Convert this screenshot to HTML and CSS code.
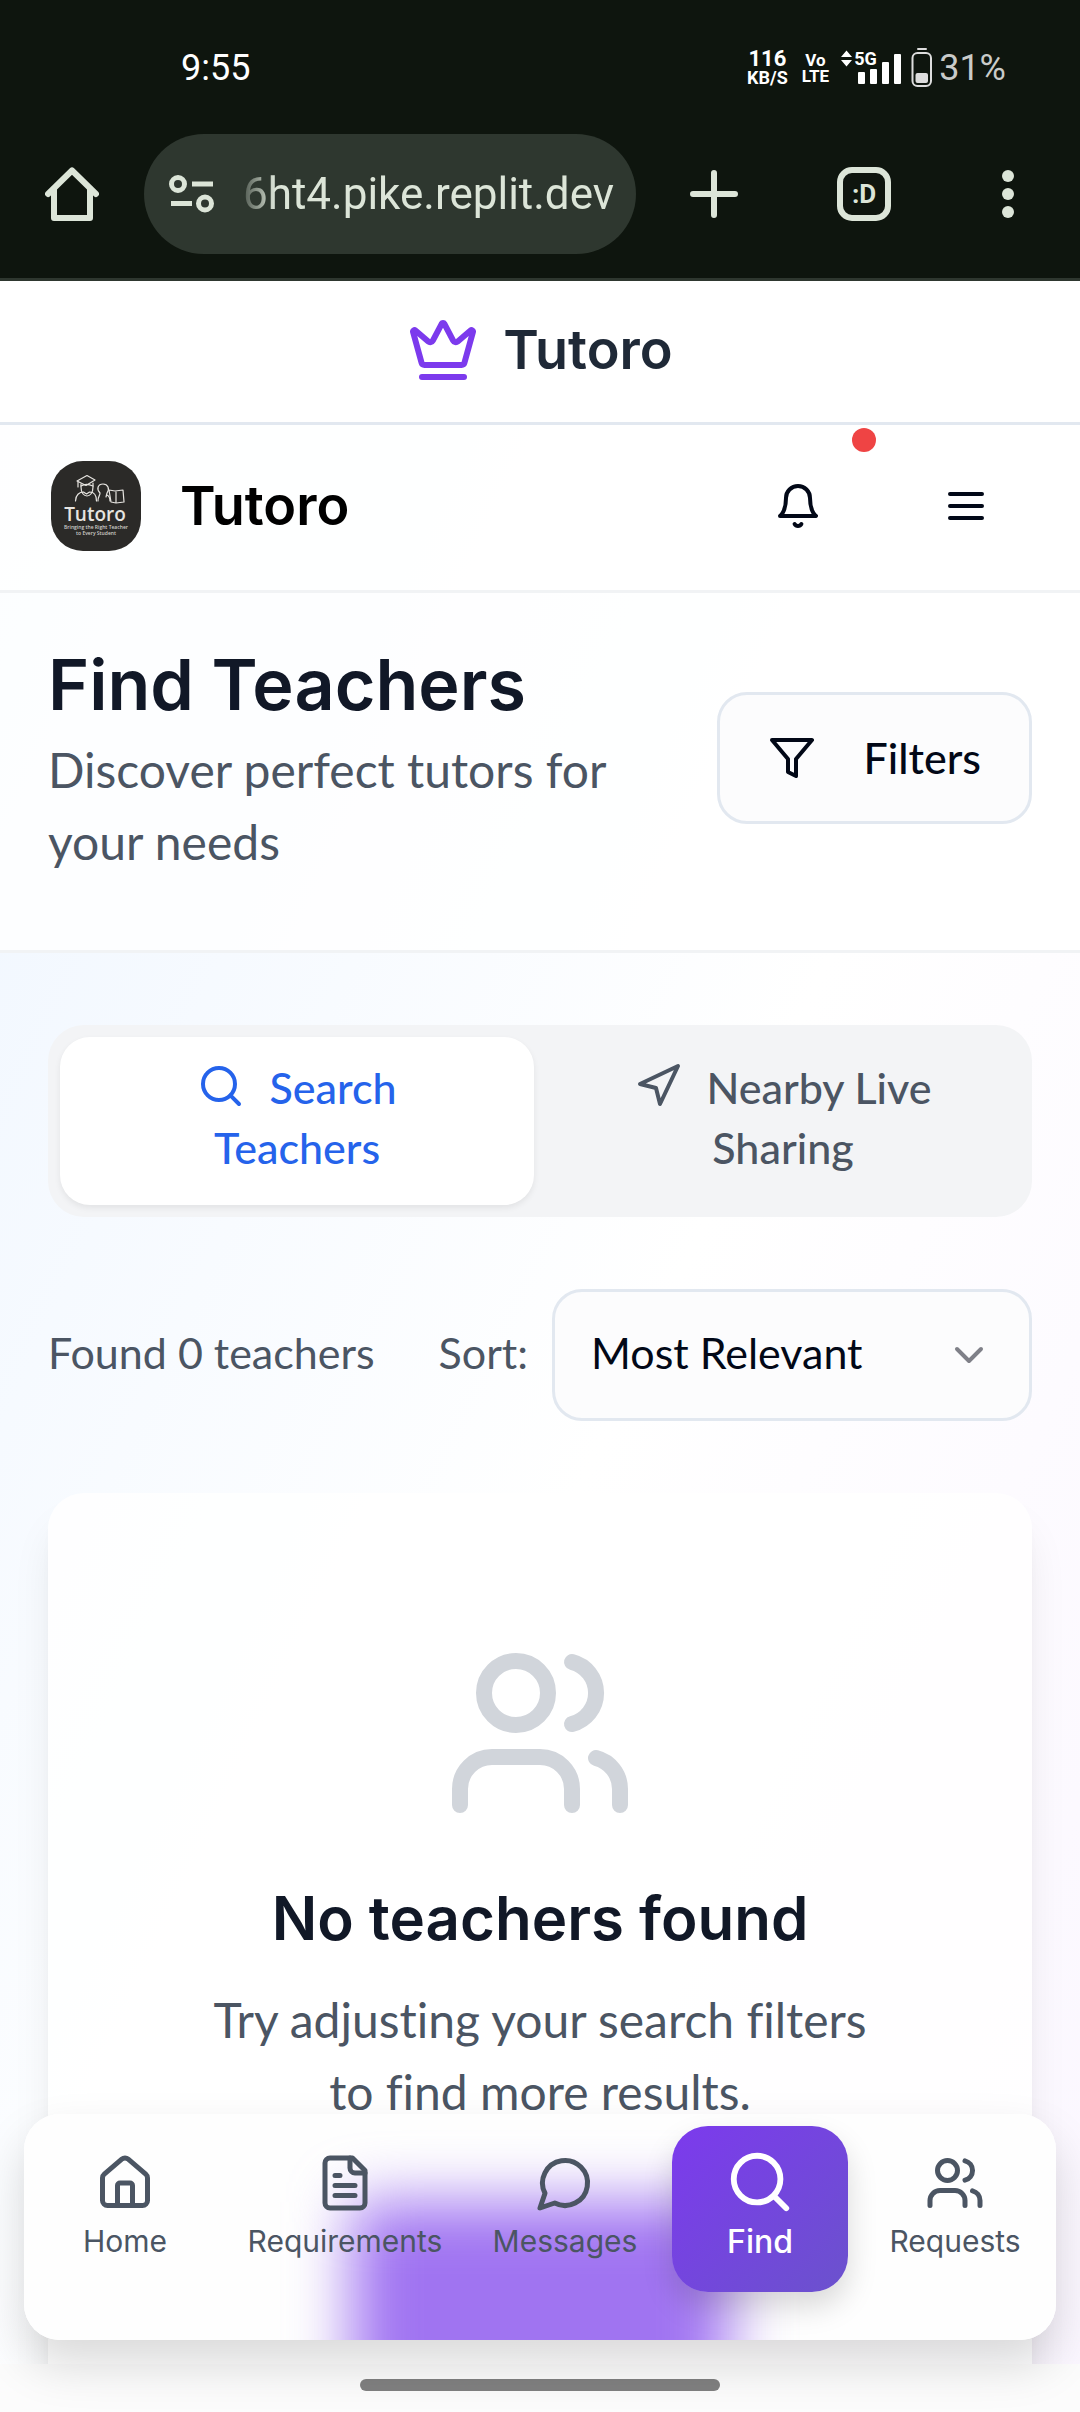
FILE: index.html
```html
<!DOCTYPE html>
<html lang="en">
<head>
<meta charset="utf-8">
<meta name="viewport" content="width=device-width, initial-scale=1">
<title>Tutoro</title>
<link rel="stylesheet" href="styles.css">
</head>
<body>
<div class="screen">
  <div class="browser">
    <div class="status">
      <span class="clock">9:55</span>
      <div class="status-icons">
        <span class="speed"><b>116</b><small>KB/S</small></span>
        <span class="volte"><b>Vo</b><b>LTE</b></span>
        <span class="signal">
          <svg width="60" height="36" viewBox="0 0 60 36" fill="#fff" aria-hidden="true">
            <path d="M0 7l5.500-6.500L11 7zM0 10h11l-5.500 6.500z"/>
            <rect x="17" y="22" width="7" height="12" rx="1"/><rect x="29" y="19" width="7" height="15" rx="1"/>
            <rect x="41" y="12" width="7" height="22" rx="1"/><rect x="53" y="4" width="7" height="30" rx="1"/>
          </svg>
          <b class="network">5G</b>
        </span>
        <svg class="battery" width="22" height="40" viewBox="0 0 22 40" aria-hidden="true">
          <rect x="6" y="0" width="10" height="2" rx="1" fill="#ddd"/>
          <rect x="1.500" y="5" width="18.500" height="33" rx="5" fill="none" stroke="#ddd" stroke-width="2"/>
          <rect x="4.500" y="25" width="12.500" height="10" rx="2" fill="#ddd"/>
        </svg>
        <span class="charge">31%</span>
      </div>
    </div>
    <div class="toolbar">
      <button class="tool" aria-label="Home">
        <svg width="54" height="54" viewBox="0 0 54 54" fill="none" stroke="#dce5d8" stroke-width="6" stroke-linejoin="round" stroke-linecap="round" aria-hidden="true"><path d="M3 27L27 3.500 51 27"/><path d="M9 22v29h36V22"/></svg>
      </button>
      <div class="address">
        <svg width="46" height="38" viewBox="0 0 46 38" fill="none" stroke="#dce5d8" stroke-width="5" aria-hidden="true"><circle cx="9" cy="9" r="6.500"/><path d="M23 9h21M2 28.500h21"/><circle cx="36" cy="28.500" r="6.500"/></svg>
        <input class="url" type="text" value="6ht4.pike.replit.dev" aria-label="Address">
      </div>
      <button class="tool tool-wide" aria-label="New tab">
        <svg width="48" height="48" viewBox="0 0 48 48" stroke="#dce5d8" stroke-width="6" stroke-linecap="round" aria-hidden="true"><path d="M24 3v42M3 24h42"/></svg>
      </button>
      <button class="tool"><span class="tabs-count">:D</span></button>
      <button class="tool" aria-label="Menu">
        <svg width="12" height="48" viewBox="0 0 12 48" fill="#dce5d8" aria-hidden="true"><circle cx="6" cy="6" r="6"/><circle cx="6" cy="24" r="6"/><circle cx="6" cy="42" r="6"/></svg>
      </button>
    </div>
  </div>

  <div class="viewport">
    <div class="scroller">
      <header class="brand">
        <svg class="icon icon-brand" viewBox="0 0 24 24" aria-hidden="true"><path d="M11.562 3.266a.5.5 0 0 1 .876 0L15.390 8.870a1 1 0 0 0 1.516.294L21.183 5.500a.5.5 0 0 1 .798.519l-2.834 10.246a1 1 0 0 1-.956.734H5.810a1 1 0 0 1-.957-.734L2.020 6.020a.5.5 0 0 1 .798-.519l4.276 3.664a1 1 0 0 0 1.516-.294z"/><path d="M5 21h14"/></svg>
        <span class="wordmark">Tutoro</span>
      </header>

      <div class="page">
        <header class="appbar">
          <a class="home-link" href="#">
            <svg class="logo" viewBox="0 0 90 90" aria-hidden="true">
              <rect width="90" height="90" rx="32" fill="#2b2a28"/>
              <g fill="none" stroke="#e6e4e0" stroke-width="1.200" stroke-linecap="round" stroke-linejoin="round">
                <path d="M26 20l10-5.500 8 4.500-9 5.500z"/><path d="M27 21v5M30 23v3c0 6 3 9 6 9s6-3 6-9v-4"/><path d="M30 25c3-2 8-2 12 0"/>
                <path d="M24.500 40c0-6 4-9 8-9l3 2 3-2c5 0 7 4 7 9"/>
                <path d="M49 32c-4-4-2-9 3-9s7 5 4 9l-1 4M49 32c0 3-2 3-2 8M56 34c2 1 3 3 3 6"/>
                <path d="M58 29l6 1 8-1 1 12-8 1-5-1zM65 31v10"/>
              </g>
              <text x="44" y="60" text-anchor="middle" class="logo-name">Tutoro</text>
              <text x="45" y="68" text-anchor="middle" class="logo-tag">Bringing the Right Teacher</text>
              <text x="45" y="74" text-anchor="middle" class="logo-tag">to Every Student</text>
            </svg>
            <span class="wordmark">Tutoro</span>
          </a>
          <div class="actions">
            <button class="icon-button" aria-label="Notifications">
              <svg class="icon" viewBox="0 0 24 24" aria-hidden="true"><path d="M6 8a6 6 0 0 1 12 0c0 7 3 9 3 9H3s3-2 3-9"/><path d="M10.300 21a1.940 1.940 0 0 0 3.400 0"/></svg>
              <span class="dot"></span>
            </button>
            <button class="icon-button" aria-label="Open menu">
              <svg class="icon" viewBox="0 0 24 24" aria-hidden="true"><path d="M4 6h16M4 12h16M4 18h16"/></svg>
            </button>
          </div>
        </header>

        <section class="intro">
          <div class="intro-text">
            <h1>Find Teachers</h1>
            <p>Discover perfect tutors for your needs</p>
          </div>
          <button class="filters">
            <svg class="icon" viewBox="0 0 24 24" aria-hidden="true"><path d="M22 3H2l8 9.460V19l4 2v-8.540z"/></svg>
            Filters
          </button>
        </section>

        <main class="content">
          <div class="tabs" role="tablist">
            <button class="tab tab-active" role="tab" aria-selected="true"><svg class="icon" viewBox="0 0 24 24" aria-hidden="true"><circle cx="11" cy="11" r="8"/><path d="M21 21l-4.300-4.300"/></svg>Search Teachers</button>
            <button class="tab" role="tab" aria-selected="false"><svg class="icon" viewBox="0 0 24 24" aria-hidden="true"><path d="M3 11l19-9-9 19-2-8z"/></svg>Nearby Live Sharing</button>
          </div>

          <div class="results-bar">
            <p>Found 0 teachers</p>
            <div class="sort">
              <label for="sort">Sort:</label>
              <div class="select">
                <select id="sort"><option>Most Relevant</option></select>
                <svg class="icon" viewBox="0 0 24 24" aria-hidden="true"><path d="M6 9l6 6 6-6"/></svg>
              </div>
            </div>
          </div>

          <section class="card">
            <svg class="icon icon-empty" viewBox="0 0 24 24" aria-hidden="true"><path d="M16 21v-2a4 4 0 0 0-4-4H6a4 4 0 0 0-4 4v2"/><circle cx="9" cy="7" r="4"/><path d="M22 21v-2a4 4 0 0 0-3-3.870"/><path d="M16 3.130a4 4 0 0 1 0 7.750"/></svg>
            <h2>No teachers found</h2>
            <p>Try adjusting your search filters to find more results.</p>
          </section>
        </main>
      </div>
    </div>

    <nav class="dock">
      <span class="dock-glass"></span>
      <a class="dock-item" href="#"><svg class="icon" viewBox="0 0 24 24" aria-hidden="true"><path d="M15 21v-8a1 1 0 0 0-1-1h-4a1 1 0 0 0-1 1v8"/><path d="M3 10a2 2 0 0 1 .709-1.528l7-5.999a2 2 0 0 1 2.582 0l7 5.999A2 2 0 0 1 21 10v9a2 2 0 0 1-2 2H5a2 2 0 0 1-2-2z"/></svg>Home</a>
      <a class="dock-item" href="#"><svg class="icon" viewBox="0 0 24 24" aria-hidden="true"><path d="M15 2H6a2 2 0 0 0-2 2v16a2 2 0 0 0 2 2h12a2 2 0 0 0 2-2V7z"/><path d="M14 2v4a2 2 0 0 0 2 2h4M10 9H8M16 13H8M16 17H8"/></svg>Requirements</a>
      <a class="dock-item" href="#"><svg class="icon" viewBox="0 0 24 24" aria-hidden="true"><path d="M7.900 20A9 9 0 1 0 4 16.100L2 22z"/></svg>Messages</a>
      <a class="dock-item dock-active" href="#" aria-current="page"><svg class="icon" viewBox="0 0 24 24" aria-hidden="true"><circle cx="11" cy="11" r="8"/><path d="M21 21l-4.300-4.300"/></svg>Find</a>
      <a class="dock-item" href="#"><svg class="icon" viewBox="0 0 24 24" aria-hidden="true"><path d="M16 21v-2a4 4 0 0 0-4-4H6a4 4 0 0 0-4 4v2"/><circle cx="9" cy="7" r="4"/><path d="M22 21v-2a4 4 0 0 0-3-3.870"/><path d="M16 3.130a4 4 0 0 1 0 7.750"/></svg>Requests</a>
    </nav>
  </div>

  <div class="gesture"><span class="pill"></span></div>
</div>
</body>
</html>
```
FILE: styles.css
```css
* { box-sizing: border-box; margin: 0; }

body {
  font-family: Lato, Inter, sans-serif;
  font-size: 43px;
  line-height: 60px;
  font-variant-ligatures: none;
  color: #020817;
  background: #fff;
}

button, input, select {
  font: inherit;
  font-variant-ligatures: none;
  color: inherit;
  background: none;
  border: 0;
  padding: 0;
}

a { color: inherit; text-decoration: none; }

.screen { display: flex; flex-direction: column; height: 100vh; }

/* Phone status bar and browser toolbar */
.browser {
  flex: none;
  background: #0e150e;
  border-bottom: 3px solid #2e372f;
  padding-bottom: 24px;
  font-family: Roboto, sans-serif;
}
.status {
  display: flex;
  justify-content: space-between;
  align-items: center;
  height: 134px;
  padding: 2px 74px 0 181px;
  color: #fff;
  font-size: 36px;
}
.status-icons { display: flex; align-items: center; }
.speed { display: flex; flex-direction: column; align-items: center; margin-right: 14px; }
.speed b { font-size: 22px; line-height: 20px; }
.speed small { font-size: 18px; line-height: 18px; font-weight: 700; }
.volte { display: flex; flex-direction: column; margin-right: 12px; align-items: center; }
.volte b { font-size: 17px; line-height: 16px; }
.signal { position: relative; display: flex; margin-right: 10px; }
.network { position: absolute; left: 13px; top: 0; font-size: 18px; line-height: 18px; }
.battery { margin-right: 6px; }
.charge { color: #c9cbc9; }

.toolbar { display: flex; align-items: center; height: 120px; }
.tool { display: flex; justify-content: center; align-items: center; width: 144px; height: 120px; }
.tool-wide { width: 156px; }
.address {
  flex: 1;
  display: flex;
  align-items: center;
  gap: 28px;
  min-width: 0;
  height: 120px;
  padding: 0 20px 0 25px;
  border-radius: 60px;
  background: #2e372f;
}
.address svg { flex: none; }
.url {
  flex: 1;
  min-width: 0;
  font-size: 44px;
  color: #dce5d8;
  mask-image: linear-gradient(to right, rgba(0, 0, 0, .2), #000 32px);
}
.tabs-count {
  width: 54px;
  height: 54px;
  border: 6px solid #dce5d8;
  border-radius: 15px;
  color: #dce5d8;
  font-size: 26px;
  line-height: 42px;
  font-weight: 700;
}

/* Page */
.viewport { position: relative; flex: 1; min-height: 0; }
.scroller { height: 100%; overflow-y: auto; scrollbar-width: none; }
.icon {
  flex: none;
  width: 48px;
  height: 48px;
  fill: none;
  stroke: currentColor;
  stroke-width: 2;
  stroke-linecap: round;
  stroke-linejoin: round;
}
.brand {
  display: flex;
  justify-content: center;
  align-items: center;
  gap: 24px;
  height: 144px;
  padding-bottom: 3px;
  border-bottom: 3px solid #e2e8f0;
  color: #1f2937;
}
.icon-brand { width: 72px; height: 72px; color: #7c3aed; }
.wordmark, h1, h2 { font-family: Inter, sans-serif; font-weight: 600; }
.wordmark { font-size: 54px; }

.page { background: linear-gradient(to bottom right, #eff6ff, #fff, #faf5ff); }
.appbar {
  display: flex;
  justify-content: space-between;
  align-items: center;
  height: 168px;
  padding: 0 48px 3px;
  border-bottom: 3px solid #f1f3f5;
  background: rgba(255, 255, 255, .9);
}
.home-link { display: flex; align-items: center; gap: 39px; padding-left: 3px; color: #000; }
.logo { width: 90px; height: 90px; }
.logo-name { font: 600 19px "Open Sans", sans-serif; fill: #e6e4e0; }
.logo-tag { font: 600 5px "Open Sans", sans-serif; fill: #d0ceca; }
.actions { display: flex; gap: 36px; }
.icon-button {
  position: relative;
  display: flex;
  justify-content: center;
  align-items: center;
  width: 132px;
  height: 108px;
}
.dot {
  position: absolute;
  top: -24px;
  right: -12px;
  width: 24px;
  height: 24px;
  border-radius: 50%;
  background: #ef4444;
}

.intro {
  display: flex;
  justify-content: space-between;
  align-items: center;
  gap: 48px;
  padding: 48px 48px 72px;
  border-bottom: 3px solid #f1f3f5;
  background: rgba(255, 255, 255, .8);
}
.intro-text { flex: 1; }
h1 { margin-bottom: 6px; font-size: 70px; line-height: 87px; color: #111827; }
.intro p, .card p { font-size: 48px; line-height: 72px; color: #4b5563; }
.filters {
  display: flex;
  align-items: center;
  gap: 48px;
  height: 132px;
  margin-bottom: 3px;
  padding: 0 48px;
  border: 3px solid #e2e8f0;
  border-radius: 30px;
  background: #fcfcfd;
  font-weight: 500;
}

.content { display: flex; flex-direction: column; gap: 72px; padding: 72px 48px 240px; }
.tabs {
  display: grid;
  grid-template-columns: 1fr 1fr;
  gap: 12px;
  padding: 12px;
  border-radius: 36px;
  background: #f3f4f6;
}
.tab { padding: 21px 60px 27px; border-radius: 30px; color: #4b5563; font-weight: 500; }
.tab .icon { margin-right: 24px; vertical-align: -6px; }
.tab-active { background: #fff; color: #2563eb; box-shadow: 0 3px 6px rgba(0, 0, 0, .07); }

.results-bar { display: flex; justify-content: space-between; align-items: center; color: #4b5563; }
.results-bar p, .results-bar label { padding-bottom: 4px; }
.sort { display: flex; align-items: center; gap: 24px; }
.select { position: relative; display: flex; align-items: center; }
.select select {
  appearance: none;
  width: 480px;
  height: 132px;
  padding: 0 36px 4px;
  border: 3px solid #e2e8f0;
  border-radius: 30px;
  background: #fcfcfd;
  color: #020817;
}
.select .icon { position: absolute; right: 39px; color: #7f8088; pointer-events: none; }

.card {
  display: flex;
  flex-direction: column;
  align-items: center;
  padding: 144px 144px 348px;
  border-radius: 36px;
  background: rgba(255, 255, 255, .8);
  box-shadow: 0 30px 45px -9px rgba(0, 0, 0, .1), 0 12px 18px -12px rgba(0, 0, 0, .1);
  text-align: center;
}
.icon-empty { width: 192px; height: 192px; margin-bottom: 47px; color: #d1d5db; }
h2 { margin-bottom: 24px; font-size: 60px; line-height: 84px; color: #111827; }

/* Floating bottom navigation */
.dock {
  position: absolute;
  left: 24px;
  right: 24px;
  bottom: 24px;
  z-index: 1;
  display: grid;
  grid-template-columns: 178fr 262fr 178fr 212fr 178fr;
  justify-items: center;
  padding: 12px 12px 48px;
  border-radius: 36px;
  background: rgba(255, 255, 255, .8);
  box-shadow: 0 24px 48px rgba(0, 0, 0, .15);
  color: #4b5563;
  font-family: Inter, sans-serif;
  font-size: 30px;
  line-height: 40px;
}
/* Frosted layer with a violet glow rising from the lower edge */
.dock-glass {
  position: absolute;
  inset: 0;
  z-index: -1;
  overflow: hidden;
  border-radius: 36px;
  background: #fefefe;
  box-shadow: inset 0 -3px rgba(255, 255, 255, .1);
}
.dock-glass::before {
  content: "";
  position: absolute;
  left: 50%;
  top: 88px;
  bottom: -120px;
  width: 376px;
  margin-left: -188px;
  background: #a074f1;
  filter: blur(30px);
}
.dock-item { display: flex; flex-direction: column; align-items: center; gap: 8px; height: 166px; padding-top: 27px; }
.dock-item .icon { width: 60px; height: 60px; }
.dock-active {
  width: 176px;
  padding-top: 21px;
  gap: 5px;
  border-radius: 36px;
  background: linear-gradient(135deg, #7c3aed, #6b52cd);
  box-shadow: 0 15px 30px rgba(0, 0, 0, .15);
  color: #fff;
  font-size: 32px;
  font-weight: 500;
}
.dock-active .icon { width: 70px; height: 70px; }

.gesture { flex: none; display: flex; justify-content: center; align-items: center; height: 48px; padding-bottom: 6px; background: #fcfcfc; }
.pill { width: 360px; height: 12px; border-radius: 6px; background: #808080; }
```
